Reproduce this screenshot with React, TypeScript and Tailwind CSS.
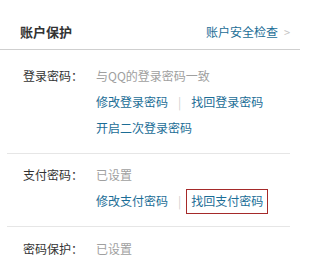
import React from 'react';

const font = { fontFamily: '"Noto Sans CJK SC", "Liberation Sans", sans-serif' };

const Sep = () => <span className="mx-[10px] text-[#cfcfcf]">|</span>;

const Link: React.FC<{ children: React.ReactNode }> = ({ children }) => (
  <a className="text-[#1b6d96] cursor-pointer">{children}</a>
);

const App: React.FC = () => {
  return (
    <div className="w-[332px] h-[255px] bg-white overflow-hidden text-[12px]" style={font}>
      {/* Header */}
      <div className="w-[300px] flex items-center justify-between pl-[20px] pr-[10px] pt-[24px] pb-[9px] border-b border-[#cfcfcf]">
        <span className="text-[13px] font-bold text-[#333] leading-[16px]">账户保护</span>
        <span className="flex items-center text-[#1b6d96] leading-[16px]">
          账户安全检查
          <span className="ml-[6px] text-[#c4c4c4] text-[11px]">&gt;</span>
        </span>
      </div>

      {/* Login password */}
      <div className="ml-[7px] w-[283px] pt-[13px] pb-[12px] border-b border-[#e6e6e6]">
        <div className="flex h-[26px] items-center">
          <span className="pl-[16px] w-[89px] text-[#333]">登录密码：</span>
          <span className="text-[#a0a0a0]">与QQ的登录密码一致</span>
        </div>
        <div className="flex h-[26px] items-center pl-[89px]">
          <Link>修改登录密码</Link>
          <Sep />
          <Link>找回登录密码</Link>
        </div>
        <div className="flex h-[26px] items-center pl-[89px]">
          <Link>开启二次登录密码</Link>
        </div>
      </div>

      {/* Pay password */}
      <div className="ml-[7px] w-[283px] pt-[8px] pb-[12px] border-b border-[#e6e6e6]">
        <div className="flex h-[26px] items-center">
          <span className="pl-[16px] w-[89px] text-[#333]">支付密码：</span>
          <span className="text-[#a0a0a0]">已设置</span>
        </div>
        <div className="flex h-[26px] items-center pl-[89px]">
          <Link>修改支付密码</Link>
          <span className="ml-[10px] mr-[5px] text-[#cfcfcf]">|</span>
          <span className="h-[25px] px-[4px] flex items-center border border-[#a52a2a]">
            <Link>找回支付密码</Link>
          </span>
        </div>
      </div>

      {/* Password protection */}
      <div className="ml-[7px] w-[283px] pt-[9px]">
        <div className="flex h-[26px] items-center">
          <span className="pl-[16px] w-[89px] text-[#333]">密码保护：</span>
          <span className="text-[#a0a0a0]">已设置</span>
        </div>
      </div>
    </div>
  );
};

export default App;
